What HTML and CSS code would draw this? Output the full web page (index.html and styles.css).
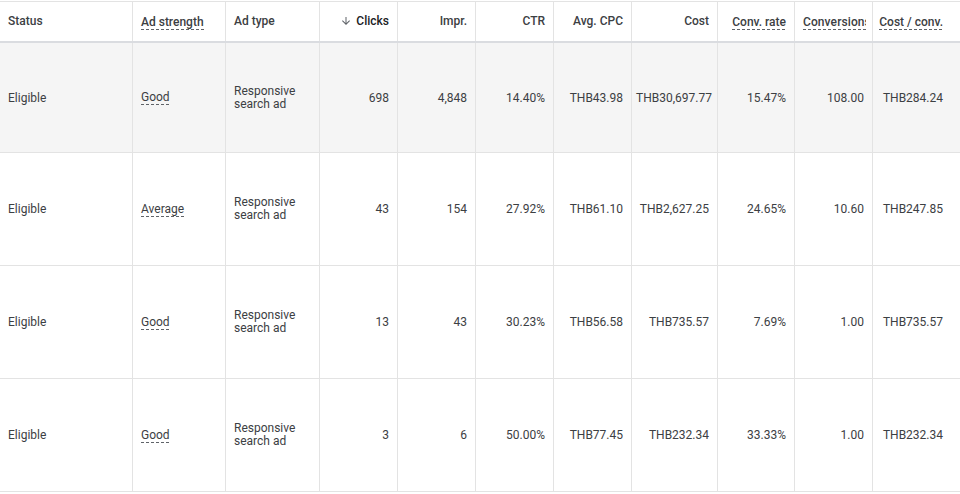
FILE: index.html
```html
<!DOCTYPE html>
<html>
<head>
<meta charset="utf-8">
<link rel="stylesheet" href="styles.css">
</head>
<body>
<div class="table">
  <div class="row head">
    <div class="cell left">Status</div>
    <div class="cell left"><span class="dash">Ad strength</span></div>
    <div class="cell left">Ad type</div>
    <div class="cell right sorted"><svg class="arrow" viewBox="0 0 24 24" width="12" height="12"><path d="M20 12l-1.41-1.41L13 16.17V4h-2v12.17l-5.58-5.59L4 12l8 8 8-8z"/></svg><span>Clicks</span></div>
    <div class="cell right">Impr.</div>
    <div class="cell right">CTR</div>
    <div class="cell right">Avg. CPC</div>
    <div class="cell right">Cost</div>
    <div class="cell right"><span class="dash">Conv. rate</span></div>
    <div class="cell right clip"><span class="clipbox"><span class="dash">Conversions</span></span></div>
    <div class="cell right last"><span class="dash">Cost / conv.</span></div>
  </div>
  <div class="row body first hover">
    <div class="cell left">Eligible</div>
    <div class="cell left"><span class="dash">Good</span></div>
    <div class="cell left wrap">Responsive search ad</div>
    <div class="cell right">698</div>
    <div class="cell right">4,848</div>
    <div class="cell right">14.40%</div>
    <div class="cell right">THB43.98</div>
    <div class="cell right tight">THB30,697.77</div>
    <div class="cell right">15.47%</div>
    <div class="cell right">108.00</div>
    <div class="cell right last">THB284.24</div>
  </div>
  <div class="row body">
    <div class="cell left">Eligible</div>
    <div class="cell left"><span class="dash">Average</span></div>
    <div class="cell left wrap">Responsive search ad</div>
    <div class="cell right">43</div>
    <div class="cell right">154</div>
    <div class="cell right">27.92%</div>
    <div class="cell right">THB61.10</div>
    <div class="cell right">THB2,627.25</div>
    <div class="cell right">24.65%</div>
    <div class="cell right">10.60</div>
    <div class="cell right last">THB247.85</div>
  </div>
  <div class="row body">
    <div class="cell left">Eligible</div>
    <div class="cell left"><span class="dash">Good</span></div>
    <div class="cell left wrap">Responsive search ad</div>
    <div class="cell right">13</div>
    <div class="cell right">43</div>
    <div class="cell right">30.23%</div>
    <div class="cell right">THB56.58</div>
    <div class="cell right">THB735.57</div>
    <div class="cell right">7.69%</div>
    <div class="cell right">1.00</div>
    <div class="cell right last">THB735.57</div>
  </div>
  <div class="row body">
    <div class="cell left">Eligible</div>
    <div class="cell left"><span class="dash">Good</span></div>
    <div class="cell left wrap">Responsive search ad</div>
    <div class="cell right">3</div>
    <div class="cell right">6</div>
    <div class="cell right">50.00%</div>
    <div class="cell right">THB77.45</div>
    <div class="cell right">THB232.34</div>
    <div class="cell right">33.33%</div>
    <div class="cell right">1.00</div>
    <div class="cell right last">THB232.34</div>
  </div>
</div>
</body>
</html>
```
FILE: styles.css
```css
html, body {
  margin: 0;
  padding: 0;
  background: #ffffff;
}
body {
  font-family: Roboto, "Liberation Sans", Arial, sans-serif;
  font-size: 12px;
  color: #3c4043;
  overflow: hidden;
  width: 960px;
  height: 494px;
}
.table {
  padding-top: 1px;
  width: 960px;
}
.row {
  display: grid;
  grid-template-columns: 132px 93px 94px 78px 78px 78px 78px 86px 77px 78px 88px;
  box-sizing: border-box;
}
.row.head {
  height: 42px;
  border-top: 1px solid #e3e3e3;
  border-bottom: 2px solid #dadce0;
  font-weight: 500;
  color: #3c4043;
}
.row.body {
  height: 113px;
  border-bottom: 1px solid #e3e3e3;
}
.row.body.first {
  height: 110px;
}
.row.hover {
  background: #f5f5f5;
}
.cell {
  display: flex;
  align-items: center;
  padding: 0 8px 0 8px;
  box-sizing: border-box;
  border-left: 1px solid #e3e3e3;
  white-space: nowrap;
  overflow: hidden;
  line-height: 14px;
}
.cell:first-child {
  border-left: none;
  padding-left: 8px;
}
.cell.left {
  justify-content: flex-start;
}
.cell.right {
  justify-content: flex-end;
}
.cell.clip {
  justify-content: flex-start;
  padding-right: 6px;
}
.clipbox {
  display: block;
  overflow: hidden;
  min-width: 0;
  padding-bottom: 1px;
}
.cell.last {
  padding-right: 17px;
}
.cell.tight {
  padding: 0 5px 0 3px;
}
.cell.wrap {
  white-space: normal;
  line-height: 13px;
}
.head .cell {
  padding-bottom: 1px;
}
.sorted {
  color: #202124;
}
.arrow {
  fill: #5f6368;
  margin-right: 4px;
  flex: none;
}
.dash {
  display: inline-block;
  padding-bottom: 1px;
  background-image: linear-gradient(to right, #5f6368 0 3px, transparent 3px 5px);
  background-size: 5px 1px;
  background-repeat: repeat-x;
  background-position: left bottom;
}
.head .dash {
  margin-top: 3px;
}
.clipbox .dash {
  margin-top: 3px;
  letter-spacing: 0.1px;
}
```
